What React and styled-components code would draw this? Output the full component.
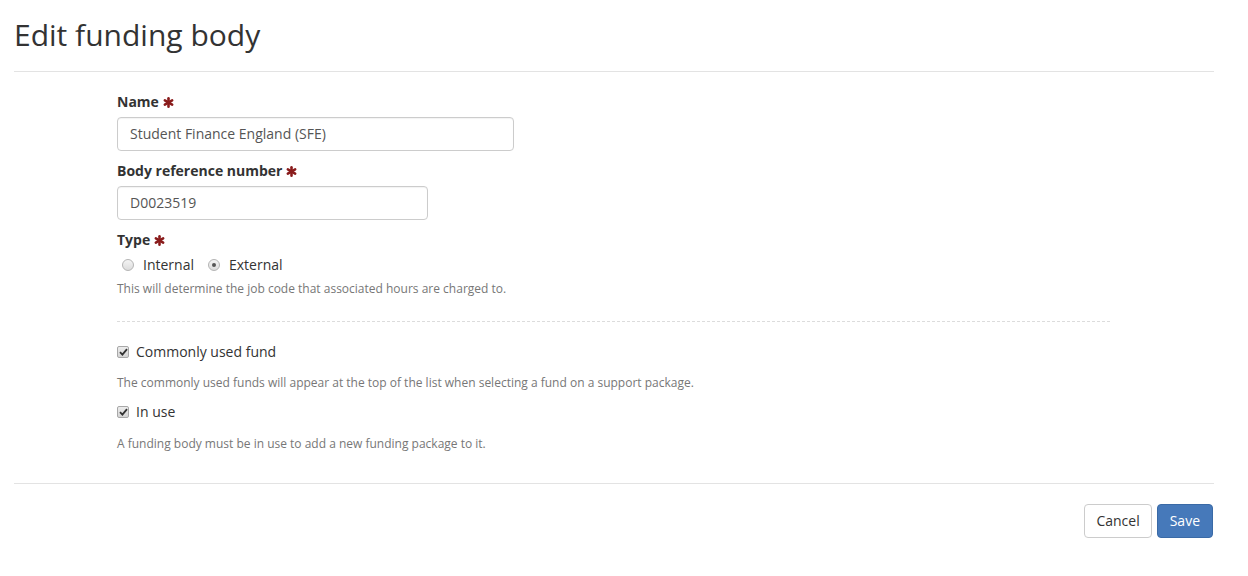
import React from 'react';
import styled, { createGlobalStyle } from 'styled-components';

const GlobalStyle = createGlobalStyle`
    body {
        margin: 0;
        background: #fff;
        font-family: "Open Sans", "Liberation Sans", sans-serif;
        font-size: 14px;
        line-height: 1.42857;
        color: #333;
    }
`;

const Page = styled.div`
    width: 1200px;
    padding: 0 14px;
`;

const Title = styled.h1`
    margin: 18px 0 20px;
    font-size: 30px;
    font-weight: 400;
    line-height: 33px;
    color: #333;
`;

const Rule = styled.hr`
    margin: 0;
    border: 0;
    border-top: 1px solid #e3e3e3;
`;

const FormBody = styled.div`
    padding: 20px 0 31px 103px;
    width: 993px;
`;

const Group = styled.div`
    margin-bottom: ${p => p.gap ?? 10}px;
`;

const Label = styled.label`
    display: block;
    margin-bottom: 5px;
    font-weight: 700;
    color: #333;
`;

const Star = styled.svg`
    display: inline-block;
    width: 11px;
    height: 11px;
    margin-left: 4px;
    vertical-align: -1px;
`;

const Input = styled.input`
    display: block;
    box-sizing: border-box;
    width: ${p => p.width}px;
    height: 34px;
    padding: 6px 12px;
    font-family: inherit;
    font-size: 14px;
    color: #555;
    background: #fff;
    border: 1px solid #ccc;
    border-radius: 4px;
    box-shadow: inset 0 1px 1px rgba(0, 0, 0, 0.05);
    outline: none;
`;

const RadioRow = styled.div`
    display: flex;
    gap: 14px;
    padding-left: 5px;
`;

const Choice = styled.span`
    display: inline-flex;
    align-items: center;
    gap: 9px;
    height: 20px;
`;

const RadioDot = styled.span`
    position: relative;
    box-sizing: border-box;
    width: 12px;
    height: 12px;
    border-radius: 50%;
    border: 1px solid #b4b4b4;
    background: linear-gradient(#f4f4f4, #dcdcdc);

    &::after {
        content: '';
        display: ${p => (p.checked ? 'block' : 'none')};
        position: absolute;
        top: 3px;
        left: 3px;
        width: 4px;
        height: 4px;
        border-radius: 50%;
        background: #555;
    }
`;

const Help = styled.p`
    margin: ${p => p.top ?? 5}px 0 ${p => p.bottom ?? 10}px;
    font-size: 12px;
    line-height: 17px;
    color: #777;
`;

const Dashed = styled.div`
    margin: 24px 0 20px;
    border-top: 1px dashed #dcdcdc;
`;

const CheckRow = styled.div`
    display: flex;
    align-items: center;
    gap: 7px;
    height: 20px;
`;

const Box = styled.span`
    display: flex;
    align-items: center;
    justify-content: center;
    box-sizing: border-box;
    width: 12px;
    height: 12px;
    border-radius: 2px;
    border: 1px solid #a8a8a8;
    background: linear-gradient(#ececec, #d4d4d4);
`;

const Footer = styled.div`
    display: flex;
    justify-content: flex-end;
    gap: 5px;
    padding: 20px 1px 20px 0;
`;

const Button = styled.button`
    height: 34px;
    padding: 6px ${p => (p.primary ? 12 : 11)}px;
    font-family: inherit;
    font-size: 14px;
    line-height: 20px;
    border-radius: 4px;
    cursor: pointer;
    color: ${p => (p.primary ? '#fff' : '#333')};
    background: ${p => (p.primary ? '#4679ba' : '#fff')};
    border: 1px solid ${p => (p.primary ? '#3a6aa6' : '#ccc')};
`;

function Required() {
    return (
        <Star viewBox="0 0 12 12">
            <g stroke="#8a1c1c" strokeWidth="2.8" strokeLinecap="round">
                <line x1="6" y1="1.4" x2="6" y2="10.6" />
                <line x1="2" y1="3.7" x2="10" y2="8.3" />
                <line x1="2" y1="8.3" x2="10" y2="3.7" />
            </g>
        </Star>
    );
}

function Check() {
    return (
        <Box>
            <svg width="9" height="8" viewBox="0 0 9 8">
                <path d="M1 4.2 L3.4 6.6 L8 1.2" fill="none" stroke="#333" strokeWidth="1.8" />
            </svg>
        </Box>
    );
}

export default function App() {
    return (
        <Page>
            <GlobalStyle />
            <Title>Edit funding body</Title>
            <Rule />

            <FormBody>
                <Group>
                    <Label>Name<Required /></Label>
                    <Input width={397} defaultValue="Student Finance England (SFE)" />
                </Group>

                <Group>
                    <Label>Body reference number<Required /></Label>
                    <Input width={311} defaultValue="D0023519" />
                </Group>

                <Group gap={0}>
                    <Label>Type<Required /></Label>
                    <RadioRow>
                        <Choice><RadioDot />Internal</Choice>
                        <Choice><RadioDot checked />External</Choice>
                    </RadioRow>
                    <Help bottom={0}>This will determine the job code that associated hours are charged to.</Help>
                </Group>

                <Dashed />

                <CheckRow><Check />Commonly used fund</CheckRow>
                <Help top={12} bottom={11}>
                    The commonly used funds will appear at the top of the list when selecting a fund on a support package.
                </Help>

                <CheckRow><Check />In use</CheckRow>
                <Help top={13} bottom={0}>A funding body must be in use to add a new funding package to it.</Help>
            </FormBody>

            <Rule />

            <Footer>
                <Button>Cancel</Button>
                <Button primary>Save</Button>
            </Footer>
        </Page>
    );
}
